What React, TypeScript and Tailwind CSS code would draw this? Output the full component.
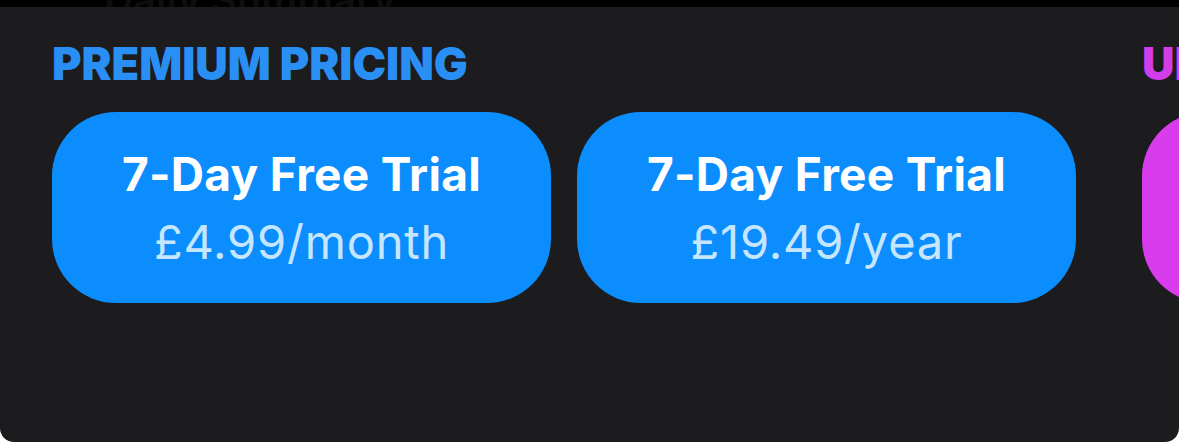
import React from 'react';

interface Plan {
  title: string;
  price: string;
}

const plans: Plan[] = [
  { title: '7-Day Free Trial', price: '£4.99/month' },
  { title: '7-Day Free Trial', price: '£19.49/year' },
];

const PlanButton: React.FC<{ plan: Plan }> = ({ plan }) => (
  <button className="w-[499px] h-[191px] shrink-0 rounded-[64px] bg-[#0b8dfd] flex flex-col items-center justify-center">
    <span className="text-white text-[46px] font-bold leading-[67px] tracking-[0.3px]">{plan.title}</span>
    <span className="text-[#c6e6ff] text-[47px] font-normal leading-[67px] tracking-[0.8px]">{plan.price}</span>
  </button>
);

export default function App() {
  return (
    <div className="w-[1179px] h-[442px] bg-white flex flex-col overflow-hidden" style={{ fontFamily: 'Inter, "Noto Sans", sans-serif' }}>
      <div className="h-[7px] bg-black overflow-hidden shrink-0">
        <div className="pl-[104px] -mt-[30px] text-[40px] text-[#0e0e0e] font-semibold">Daily Summary</div>
      </div>
      <div className="flex-1 bg-[#1c1c1e] rounded-b-[14px] overflow-hidden flex gap-[66px] pl-[52px]">
        <section className="shrink-0">
          <h2 className="mt-[29px] text-[#2a8ff5] text-[45px] font-black leading-[56px]">PREMIUM PRICING</h2>
          <div className="mt-[20px] flex gap-[26px]">
            {plans.map((p) => (
              <PlanButton key={p.price} plan={p} />
            ))}
          </div>
        </section>
        <section className="shrink-0">
          <h2 className="mt-[29px] text-[#d23de9] text-[45px] font-black leading-[56px]">UNLIMITED</h2>
          <div className="mt-[20px] w-[499px] h-[191px] rounded-[64px] bg-[#d93ced]" />
        </section>
      </div>
    </div>
  );
}
